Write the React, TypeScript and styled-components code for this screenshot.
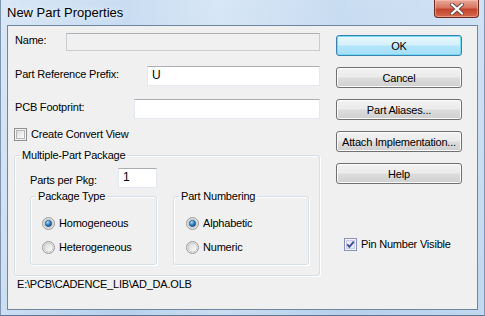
import styled, { createGlobalStyle } from "styled-components";

const GlobalStyle = createGlobalStyle`
  html, body {
    margin: 0;
    padding: 0;
    background: #ffffff;
    overflow: hidden;
  }
`;

const RadioIcon = ({ checked }: { checked: boolean }) => (
  <svg width="13" height="13" viewBox="0 0 13 13">
    <defs>
      <linearGradient id="rfill" x1="0" y1="0" x2="1" y2="1">
        <stop offset="0" stopColor="#d6d6d6" />
        <stop offset="1" stopColor="#ffffff" />
      </linearGradient>
      <radialGradient id="rdot" cx="0.35" cy="0.3" r="0.8">
        <stop offset="0" stopColor="#b8e2fb" />
        <stop offset="0.45" stopColor="#3d8ccb" />
        <stop offset="1" stopColor="#13457a" />
      </radialGradient>
    </defs>
    <circle cx="6.5" cy="6.5" r="6" fill="#f4f4f4" stroke="#959595" strokeWidth="1" />
    <circle cx="6.5" cy="6.5" r="4.5" fill="url(#rfill)" stroke="#c4c4c4" strokeWidth="1" />
    {checked && <circle cx="6.5" cy="6.5" r="3.2" fill="url(#rdot)" stroke="#1c4e82" strokeWidth="0.6" />}
  </svg>
);

const CheckIcon = ({ checked }: { checked: boolean }) => (
  <svg width="13" height="13" viewBox="0 0 13 13">
    <defs>
      <linearGradient id="cfill" x1="0" y1="0" x2="1" y2="1">
        <stop offset="0" stopColor="#dcdcdc" />
        <stop offset="1" stopColor="#ffffff" />
      </linearGradient>
    </defs>
    <rect x="0.5" y="0.5" width="12" height="12" fill="#f4f4f4" stroke={checked ? "#8a8fbd" : "#8e8f8f"} />
    <rect
      x="2.5"
      y="2.5"
      width="8"
      height="8"
      fill={checked ? "#e9e9f6" : "url(#cfill)"}
      stroke={checked ? "#c9cbe4" : "#b4b6ba"}
    />
    {checked && (
      <path d="M3.2 6.3 L5.4 8.8 L9.8 3.6" fill="none" stroke="#3c4d98" strokeWidth="1.8" strokeLinejoin="miter" />
    )}
  </svg>
);

const App = () => {
  return (
    <>
      <GlobalStyle />
      <Window>
        <TitleBar>
          <Title>New Part Properties</Title>
          <CloseButton>
            <svg width="16" height="12" viewBox="0 0 16 12">
              <path d="M3 1.5 L13 10.5 M13 1.5 L3 10.5" stroke="#6b4a44" strokeWidth="4" strokeLinecap="round" />
              <path d="M3 1.5 L13 10.5 M13 1.5 L3 10.5" stroke="#ffffff" strokeWidth="2.2" strokeLinecap="round" />
            </svg>
          </CloseButton>
        </TitleBar>
        <Client>
          <LeftCol>
            <FieldRow $top={7} $height={18}>
              <Label>Name:</Label>
              <TextBox $width={254} $disabled />
            </FieldRow>
            <FieldRow $top={15} $height={20}>
              <Label>Part Reference Prefix:</Label>
              <TextBox $width={173}>U</TextBox>
            </FieldRow>
            <FieldRow $top={13} $height={20}>
              <Label>PCB Footprint:</Label>
              <TextBox $width={186} />
            </FieldRow>
            <CheckRow $top={9} $left={0}>
              <CheckIcon checked={false} />
              <Label>Create Convert View</Label>
            </CheckRow>
            <Group $top={8} $padding="0 9px 10px 15px">
              <Legend $indent={-10}>Multiple-Part Package</Legend>
              <PkgRow>
                <Label>Parts per Pkg:</Label>
                <TextBox $width={39}>1</TextBox>
              </PkgRow>
              <SubGroups>
                <Group $top={2} $width={127} $padding="0 0 10px 11px">
                  <Legend $indent={-6}>Package Type</Legend>
                  <RadioRow>
                    <RadioIcon checked />
                    <Label>Homogeneous</Label>
                  </RadioRow>
                  <RadioRow>
                    <RadioIcon checked={false} />
                    <Label>Heterogeneous</Label>
                  </RadioRow>
                </Group>
                <Group $top={2} $width={136} $padding="0 0 10px 12px">
                  <Legend $indent={-7}>Part Numbering</Legend>
                  <RadioRow>
                    <RadioIcon checked />
                    <Label>Alphabetic</Label>
                  </RadioRow>
                  <RadioRow>
                    <RadioIcon checked={false} />
                    <Label>Numeric</Label>
                  </RadioRow>
                </Group>
              </SubGroups>
            </Group>
            <PathText>E:\PCB\CADENCE_LIB\AD_DA.OLB</PathText>
          </LeftCol>
          <RightCol>
            <Button $default>OK</Button>
            <Button>Cancel</Button>
            <Button>Part Aliases...</Button>
            <Button>Attach Implementation...</Button>
            <Button>Help</Button>
            <CheckRow $top={43} $left={8}>
              <CheckIcon checked />
              <Label>Pin Number Visible</Label>
            </CheckRow>
          </RightCol>
        </Client>
      </Window>
    </>
  );
};

export default App;

const Window = styled.div`
  width: 485px;
  height: 316px;
  box-sizing: border-box;
  display: flex;
  flex-direction: column;
  background: linear-gradient(90deg, rgba(255, 255, 255, 0.3) 0%, rgba(255, 255, 255, 0) 25%,
      rgba(255, 255, 255, 0.28) 45%, rgba(255, 255, 255, 0) 70%, rgba(255, 255, 255, 0.15) 100%),
    linear-gradient(180deg, #c9ddf2 0%, #b7d1ec 100%);
  border-left: 1px solid #7d95b0;
  border-right: 1px solid #7d95b0;
  border-bottom: 1px solid #5d7590;
  font-family: "Liberation Sans", Arial, sans-serif;
  color: #000;
`;

const TitleBar = styled.div`
  height: 25px;
  flex: none;
  display: flex;
  align-items: flex-start;
  justify-content: space-between;
`;

const Title = styled.div`
  font-size: 13px;
  line-height: 13px;
  margin: 6px 0 0 6px;
  color: #000;
  text-shadow: 0 0 6px rgba(255, 255, 255, 0.9);
`;

const CloseButton = styled.div`
  width: 45px;
  height: 18px;
  margin-right: 5px;
  box-sizing: border-box;
  border: 1px solid #6d2a1f;
  border-top: none;
  border-radius: 0 0 4px 4px;
  background: linear-gradient(180deg, #e9a99a 0%, #d77561 45%, #c2442c 55%, #d46a4c 100%);
  box-shadow: inset 0 0 0 1px rgba(255, 200, 190, 0.5);
  display: flex;
  align-items: center;
  justify-content: center;
`;

const Client = styled.div`
  flex: 1;
  margin: 0 6px 5px 6px;
  border: 1px solid #6f86a0;
  background: #f0f0f0;
  display: flex;
  align-items: flex-start;
`;

const LeftCol = styled.div`
  width: 312px;
  box-sizing: border-box;
  padding-left: 6px;
  display: flex;
  flex-direction: column;
`;

const RightCol = styled.div`
  width: 126px;
  margin-left: 16px;
  padding-top: 9px;
  display: flex;
  flex-direction: column;
  gap: 11px;
`;

const Label = styled.span`
  font-size: 11px;
  letter-spacing: -0.2px;
  white-space: nowrap;
  line-height: 13px;
`;

const FieldRow = styled.div<{ $top: number; $height: number }>`
  margin-top: ${(p) => p.$top}px;
  height: ${(p) => p.$height}px;
  display: flex;
  align-items: center;
  justify-content: space-between;
  padding-left: 1px;
  & > span {
    margin-top: -3px;
  }
`;

const TextBox = styled.div<{ $width: number; $disabled?: boolean }>`
  width: ${(p) => p.$width}px;
  height: 100%;
  box-sizing: border-box;
  border: 1px solid ${(p) => (p.$disabled ? "#c9cdd2" : "#e3e9ef")};
  border-top-color: ${(p) => (p.$disabled ? "#adb2b5" : "#abadb3")};
  background: ${(p) => (p.$disabled ? "#f0f0f0" : "#ffffff")};
  font-size: 12px;
  padding: 1px 0 0 4px;
  display: flex;
  align-items: flex-start;
`;

const CheckRow = styled.div<{ $top: number; $left: number }>`
  margin-top: ${(p) => p.$top}px;
  margin-left: ${(p) => p.$left}px;
  height: 13px;
  display: flex;
  align-items: center;
  gap: 4px;
  & > svg {
    flex: none;
  }
`;

const Group = styled.fieldset<{ $top: number; $width?: number; $padding: string }>`
  margin: ${(p) => p.$top}px 0 0 0;
  width: ${(p) => (p.$width ? `${p.$width}px` : "auto")};
  box-sizing: border-box;
  min-inline-size: 0;
  padding: ${(p) => p.$padding};
  border: 1px solid #d5dfe5;
  border-radius: 3px;
  box-shadow: inset 1px 1px 0 #ffffff, 1px 1px 0 #ffffff;
  display: flex;
  flex-direction: column;
`;

const Legend = styled.legend<{ $indent: number }>`
  font-size: 11px;
  letter-spacing: -0.2px;
  line-height: 13px;
  padding: 0 2px;
  margin-left: ${(p) => p.$indent}px;
  white-space: nowrap;
`;

const PkgRow = styled.div`
  height: 20px;
  margin-top: 6px;
  display: flex;
  align-items: center;
  & > span {
    width: 88px;
    margin-top: 5px;
  }
`;

const SubGroups = styled.div`
  display: flex;
  gap: 16px;
`;

const RadioRow = styled.div`
  height: 13px;
  margin-top: 14px;
  display: flex;
  align-items: center;
  gap: 4px;
  & + & {
    margin-top: 11px;
  }
  & > svg {
    flex: none;
  }
`;

const PathText = styled.div`
  font-size: 11px;
  letter-spacing: -0.2px;
  margin: 2px 0 0 3px;
  line-height: 13px;
`;

const Button = styled.div<{ $default?: boolean }>`
  height: 21px;
  box-sizing: border-box;
  border: 1px solid ${(p) => (p.$default ? "#3c7fb1" : "#707070")};
  border-radius: 3px;
  background: ${(p) =>
    p.$default
      ? "linear-gradient(180deg, #e8f7fd 0%, #d4f1fc 48%, #b3e6fb 52%, #a6def7 100%)"
      : "linear-gradient(180deg, #f2f2f2 0%, #ebebeb 48%, #dddddd 52%, #cfcfcf 100%)"};
  box-shadow: inset 0 0 0 1px ${(p) => (p.$default ? "#74dcf2" : "#fbfbfb")};
  display: flex;
  align-items: center;
  justify-content: center;
  font-size: 11px;
  letter-spacing: -0.2px;
  white-space: nowrap;
`;
